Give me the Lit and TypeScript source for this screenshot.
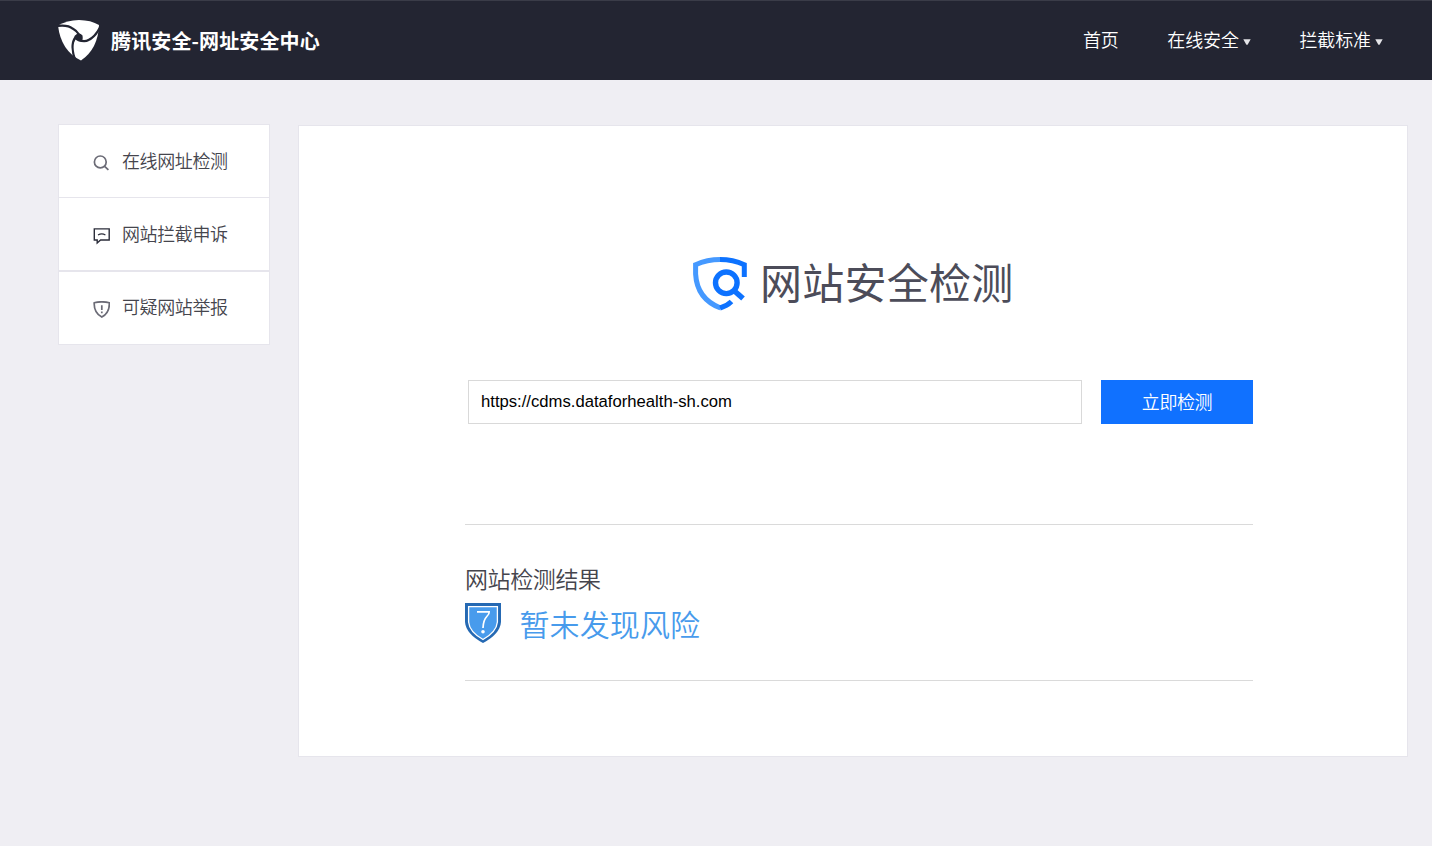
import { LitElement, html, css, svg } from "lit";
import { customElement, property } from "lit/decorators.js";

const icons: Record<string, unknown> = {
  search: svg`<circle cx="7.3" cy="6.9" r="5.9"/><path d="M11.6 11.3L15.4 14.9"/>`,
  appeal: svg`<g stroke="#2b2d3a" stroke-width="1.4"><path d="M1.3 .9H16.2V12H7.6L4.2 15V12H1.3Z"/><path d="M5 7.1Q8.8 4.8 12.4 7.1" stroke-width="1.2"/></g>`,
  report: svg`<path d="M1.2 1.8Q8.8 -.2 16.3 1.8Q16.8 11.8 8.8 16.1Q.8 11.8 1.2 1.8Z"/><path d="M8.8 4.2V8.9M8.8 10.5V12.3" stroke-width="1.7"/>`,
};

@customElement("nav-link")
class NavLink extends LitElement {
  @property() label = "";
  @property({ type: Boolean }) menu = false;
  static styles = css`
    :host { display: flex; align-items: center; color: #fff; font-size: 18px; line-height: 26px; letter-spacing: -0.1px; white-space: nowrap; }
    svg { display: block; width: 8px; height: 6px; margin: 5px 0 0 4px; }
  `;
  render() {
    return html`<span>${this.label}</span>${this.menu
      ? html`<svg viewBox="0 0 8 6"><path d="M.3 .2H7.7L4.6 5.8H3.4Z" fill="#e4e4e8"/></svg>`
      : ""}`;
  }
}

@customElement("side-item")
class SideItem extends LitElement {
  @property() label = "";
  @property() icon = "";
  static styles = css`
    :host { display: flex; align-items: center; height: 72px; padding-left: 34px; background: #fff; color: #45454d; font-size: 18px; line-height: 26px; letter-spacing: -0.4px; white-space: nowrap; }
    svg { width: 17px; height: 17px; margin: 4px 12px 0 0; fill: none; stroke: #6b6b76; stroke-width: 1.7; }
    span { padding-bottom: 2px; }
  `;
  render() {
    return html`<svg viewBox="0 0 17 17">${icons[this.icon]}</svg><span>${this.label}</span>`;
  }
}

@customElement("app-root")
class AppRoot extends LitElement {
  static styles = css`
    :host { display: block; min-height: 846px; background: #efeef3; font-family: "Liberation Sans", "Noto Sans CJK SC", sans-serif; font-weight: 350; }
    nav-link, side-item, h3, .verdict { font-family: "Noto Sans CJK SC", sans-serif; }
    * { box-sizing: border-box; }
    header { display: flex; align-items: center; height: 80px; padding: 0 49px 0 58px; background: #232532; border-top: 1px solid #3a3c48; }
    .logo { width: 41px; height: 41px; margin-right: 12px; flex: none; }
    h1 { margin: 0; color: #fff; font: 700 20px/28px "Noto Sans CJK SC", sans-serif; letter-spacing: .13px; white-space: nowrap; }
    nav { display: flex; gap: 48.5px; margin-left: auto; margin-bottom: 3px; }
    .body { display: flex; align-items: flex-start; padding: 44px 24px 0 58px; gap: 28px; }
    .side { display: flex; flex-direction: column; width: 212px; flex: none; border: 1px solid #e6e5ec; background: #e6e5ec; gap: 1px; }
    .side :last-child { margin-top: 1px; padding-bottom: 2px; }
    .card { width: 1110px; height: 632px; margin-top: 1px; padding: 130px 154px 0 166px; background: #fff; border: 1px solid #e6e5ec; }
    .title { display: flex; align-items: center; height: 56px; margin-left: 228px; gap: 13px; }
    .title svg { width: 54px; height: 54px; }
    h2 { margin: 2px 0 0; font-weight: 400; font-size: 42px; line-height: 56px; letter-spacing: .25px; color: #4c4c59; white-space: nowrap; }
    .form { display: flex; margin: 68px 0 0 3px; gap: 19px; }
    input { width: 614px; height: 44px; padding: 0 12px; border: 1px solid #d9d9d9; border-radius: 0; color: #000; background: #fff; font: 400 16.67px "Liberation Sans", sans-serif; outline: none; }
    button { width: 152px; height: 44px; padding: 0 0 2px; border: 0; background: #1071ff; color: #fff; font: 350 18px "Noto Sans CJK SC", sans-serif; letter-spacing: -0.4px; }
    .result { margin-top: 100px; height: 157px; border-top: 1px solid #dadada; border-bottom: 1px solid #dadada; padding-top: 37px; }
    h3 { margin: 0; font-size: 23px; font-weight: 350; line-height: 32px; letter-spacing: -0.4px; color: #45454d; }
    .verdict { display: flex; align-items: center; height: 52px; margin-top: 3px; gap: 18.5px; color: #489bec; font-size: 30px; line-height: 44px; letter-spacing: .1px; }
    .verdict svg { width: 36px; height: 40px; }
    .verdict span { padding-bottom: 1px; }
  `;
  render() {
    return html`
      <header>
        <svg class="logo" viewBox="0 0 41 41">
          <path d="M0 5.5Q9 .2 21 0Q33 .2 41 5Q40 29 23 40.5Q3 31 0 5.5Z" fill="#fff"/>
          <g fill="none" stroke="#232532" stroke-width="2.2">
            <path d="M-1 6Q10 4.6 15 8.8Q19 11 21 14.5"/>
            <path d="M42 7.5Q37 17 30.5 20Q27 22.3 20 20"/>
            <path d="M18.2 42Q13.2 31 15 22.5Q16 18 19 16"/>
          </g>
          <path d="M16.5 16Q21 11.5 24.5 15.5Q25.3 20.5 23 21.5Q19.5 21.5 17.2 19.5Z" fill="#232532"/>
        </svg>
        <h1>腾讯安全-网址安全中心</h1>
        <nav>
          <nav-link label="首页"></nav-link>
          <nav-link label="在线安全" menu></nav-link>
          <nav-link label="拦截标准" menu></nav-link>
        </nav>
      </header>
      <div class="body">
        <div class="side">
          <side-item icon="search" label="在线网址检测"></side-item>
          <side-item icon="appeal" label="网站拦截申诉"></side-item>
          <side-item icon="report" label="可疑网站举报"></side-item>
        </div>
        <main class="card">
          <div class="title">
            <svg viewBox="0 0 54 54" fill="none" stroke-width="5">
              <path d="M27.5 2.6Q14 2.6 2.6 7.7V17Q4 42 27.5 51" stroke="#4599ff"/>
              <path d="M27 2.6Q40 2.6 51.3 7.7V20M27 51Q34 49 38.5 44.5" stroke="#0d72ff"/>
              <circle cx="33.3" cy="25.8" r="10.8" stroke="#0d72ff" stroke-width="5.4"/>
              <path d="M41.5 34L50 41.5" stroke="#0d72ff" stroke-width="5.5"/>
            </svg>
            <h2>网站安全检测</h2>
          </div>
          <div class="form">
            <input value="https://cdms.dataforhealth-sh.com" />
            <button>立即检测</button>
          </div>
          <section class="result">
            <h3>网站检测结果</h3>
            <div class="verdict">
              <svg viewBox="0 0 36 40">
                <path d="M0 0H36V19Q35 31 18 40Q1 31 0 19Z" fill="#2569b3"/>
                <path d="M3.6 3.6H32.4V19Q31.5 29 18 36.5Q4.5 29 3.6 19Z" fill="#489bec" stroke="#fff" stroke-width="1.3"/>
                <path d="M12 8.8H24.2Q24.4 11 21.8 13.5Q18.3 17 18 25" fill="none" stroke="#fff" stroke-width="1.7"/>
                <circle cx="18" cy="28.7" r="1.8" fill="#fff"/>
              </svg>
              <span>暂未发现风险</span>
            </div>
          </section>
        </main>
      </div>
    `;
  }
}
